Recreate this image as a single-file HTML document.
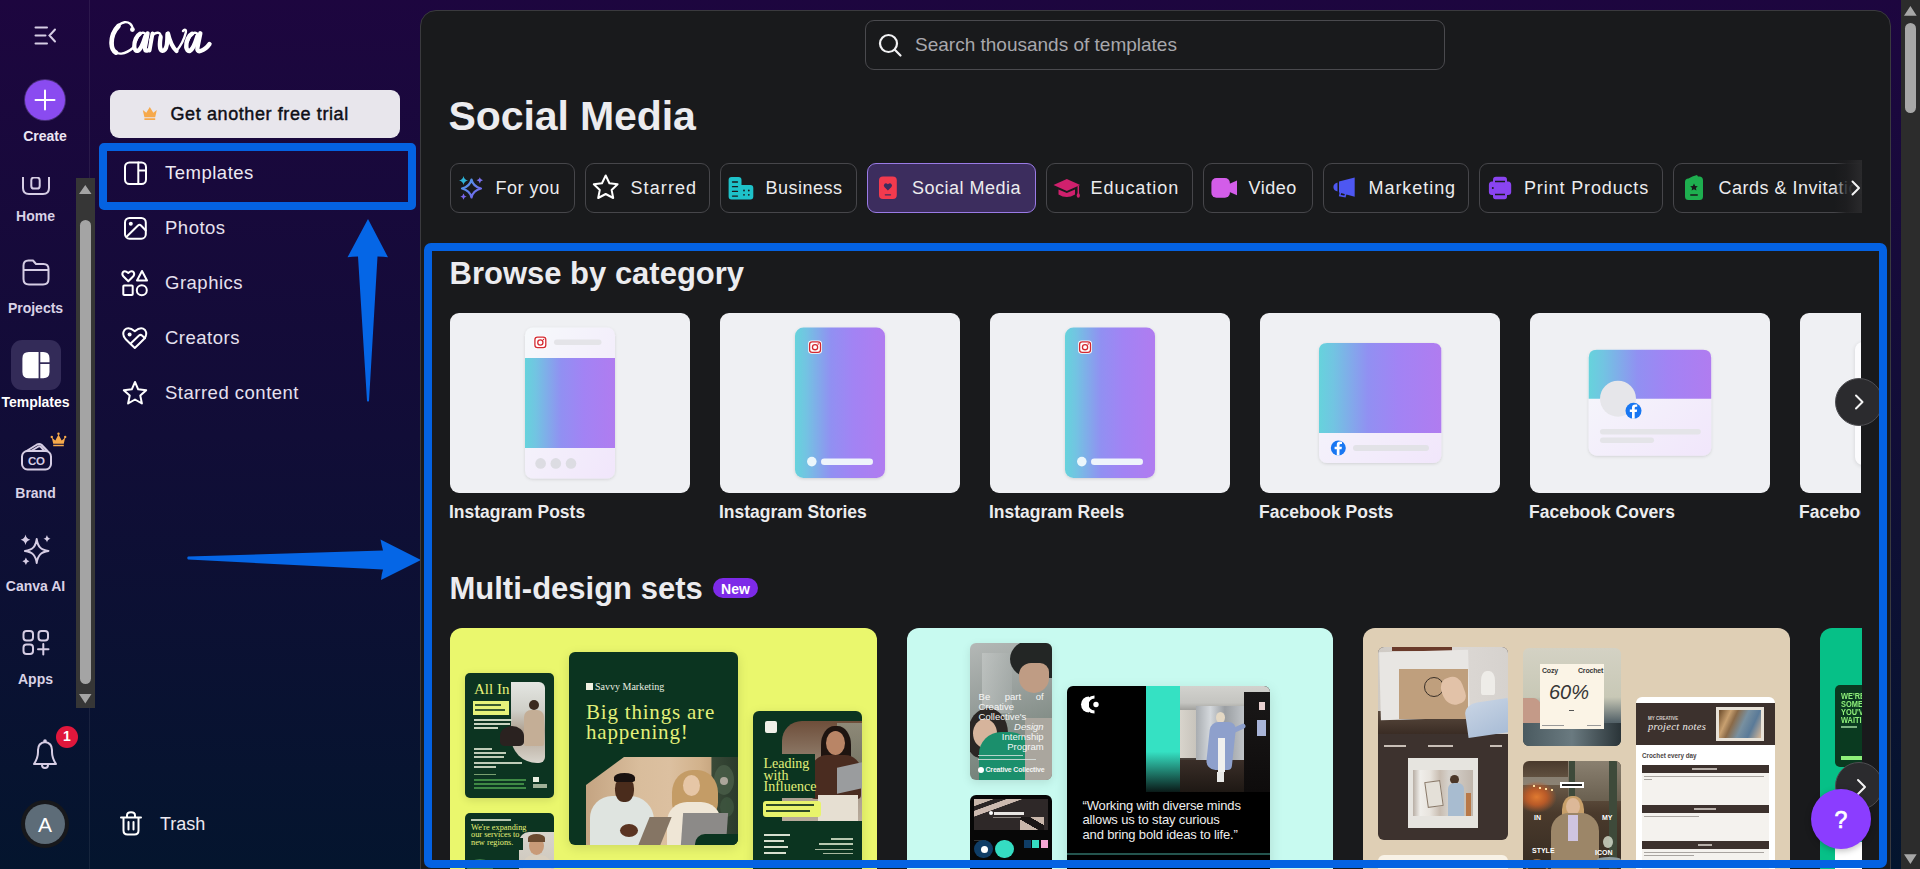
<!DOCTYPE html>
<html><head><meta charset="utf-8">
<style>
html,body{margin:0;padding:0;width:1920px;height:869px;overflow:hidden;}
body{background:linear-gradient(180deg,#1d063f 0%,#110d37 50%,#04152e 100%);font-family:"Liberation Sans",sans-serif;position:relative;color:#fff;}
.a{position:absolute;}
.t{position:absolute;white-space:nowrap;line-height:1;}
svg{position:absolute;overflow:visible;}
.rl{position:absolute;font-size:13px;font-weight:700;color:#d9d2e6;white-space:nowrap;line-height:1;text-align:center;width:90px;left:0;}
.sp{position:absolute;left:165px;font-size:18.5px;letter-spacing:0.5px;margin-top:-0.4px;color:#e6e1ef;white-space:nowrap;line-height:1;}
.chip{position:absolute;top:163px;height:50px;box-sizing:border-box;border:1px solid #46464a;border-radius:9px;}
.ct{position:absolute;top:179px;font-size:18px;letter-spacing:0.5px;color:#ececee;white-space:nowrap;line-height:1;}
.card{position:absolute;top:313px;width:240px;height:180px;border-radius:9px;background:#eff0f3;overflow:hidden;}
.cl{position:absolute;top:504.2px;font-size:17.5px;font-weight:700;color:#ececee;white-space:nowrap;line-height:1;}
.grad{background:linear-gradient(90deg,#5fd6de 0%,#8d92f1 38%,#a284f4 65%,#b07cf0 100%);}
.set{position:absolute;top:628px;width:427px;height:300px;border-radius:12px;overflow:hidden;}
</style></head><body>


<!-- ===== LEFT RAIL ===== -->
<div class="a" style="left:89px;top:0;width:1px;height:869px;background:rgba(255,255,255,0.07)"></div>
<!-- menu icon -->
<svg style="left:0;top:0" width="90" height="60"><g stroke="#d6cde4" stroke-width="2" stroke-linecap="round" fill="none">
<path d="M35.5 27.5H47M35.5 35.5H45.5M35.5 43.5H47M55 29.5L49.5 35.5L55 41.5"/></g></svg>
<!-- create -->
<div class="a" style="left:25px;top:80px;width:40px;height:40px;border-radius:50%;background:#8a4bf0;box-shadow:0 0 0 1px rgba(180,140,255,0.3)"></div>
<svg style="left:0;top:0" width="90" height="130"><path d="M45 90.5V109.5M35.5 100H54.5" stroke="#fff" stroke-width="2" stroke-linecap="round"/></svg>
<div class="rl" style="top:129px;font-size:14px;color:#ece6f4">Create</div>

<!-- rail scroll area -->
<div class="a" style="left:0;top:177px;width:76px;height:531px;overflow:hidden">
  <svg style="left:0;top:-177px" width="76" height="720"><g stroke="#d6cde4" stroke-width="2" fill="none" stroke-linejoin="round">
   <path d="M23 160V188Q23 194 29 194H43Q49 194 49 188V160"/>
   <rect x="31.3" y="177.6" width="8.4" height="10.9" rx="2.6"/>
   <path d="M23.5 266V279Q23.5 284.5 29 284.5H43Q48.5 284.5 48.5 279V269Q48.5 264 43.5 264H36L33 260.5H28.5Q23.5 260.5 23.5 265.5Z"/>
   <path d="M23.5 270H48.5"/>
  </g></svg>
</div>
<div class="rl" style="top:209px;width:71px;font-size:14px">Home</div>
<div class="rl" style="top:301px;width:71px;font-size:14px">Projects</div>
<div class="a" style="left:11px;top:340px;width:50px;height:50px;border-radius:11px;background:#332b58"></div>
<svg style="left:0;top:0" width="90" height="400"><path fill="#fff" d="M28.8 352H38.6V378.3H28.8Q22.4 378.3 22.4 371.9V358.4Q22.4 352 28.8 352ZM40.3 352H43.3Q49.5 352 49.5 358.2V362.3H40.3ZM40.3 364H49.5V372.1Q49.5 378.3 43.3 378.3H40.3Z"/></svg>
<div class="rl" style="top:394.5px;width:71px;font-size:14px;color:#fff">Templates</div>
<!-- brand -->
<svg style="left:0;top:0" width="90" height="500"><g stroke="#d6cde4" stroke-width="2" fill="none" stroke-linejoin="round" stroke-linecap="round">
 <path d="M26.5 451L37 444.5Q39.5 443.2 41.5 444.8L47.5 451"/>
 <path d="M31 451L38.5 446.5Q40 445.8 41 447L44.5 451"/>
 <rect x="22" y="451" width="29" height="18.5" rx="5.5"/>
</g>
<text x="36.3" y="464.6" text-anchor="middle" font-family="Liberation Sans" font-weight="700" font-size="11.5" fill="#d6cde4" letter-spacing="-0.3">CO</text>
<path fill="#f6a94b" d="M51.8 437.5L55.3 440.5L58.5 434.5L61.7 440.5L65.2 437.5L63.8 443.8H53.2Z M53.2 444.8H63.8V446.2H53.2Z"/>
<circle cx="51.8" cy="437" r="1.2" fill="#f6a94b"/><circle cx="58.5" cy="433.8" r="1.2" fill="#f6a94b"/><circle cx="65.2" cy="437" r="1.2" fill="#f6a94b"/>
</svg>
<div class="rl" style="top:486px;width:71px;font-size:14px">Brand</div>
<!-- canva ai -->
<svg style="left:0;top:0" width="90" height="600"><g stroke="#d6cde4" stroke-width="1.9" fill="none" stroke-linejoin="round">
 <path d="M36.7 539C37.8 546.5 40.5 550 48.5 551C40.5 552 37.8 555.5 36.7 563C35.6 555.5 32.9 552 24.9 551C32.9 550 35.6 546.5 36.7 539Z"/>
</g><g fill="#d6cde4">
 <path d="M25.5 534.5Q26.3 538.9 30.3 539.7Q26.3 540.5 25.5 544.9Q24.7 540.5 20.7 539.7Q24.7 538.9 25.5 534.5Z"/>
 <path d="M47 535Q47.6 538.2 50.5 538.8Q47.6 539.4 47 542.6Q46.4 539.4 43.5 538.8Q46.4 538.2 47 535Z"/>
 <path d="M25.9 557.5Q26.5 560.6 29.4 561.2Q26.5 561.8 25.9 564.9Q25.3 561.8 22.4 561.2Q25.3 560.6 25.9 557.5Z"/>
</g></svg>
<div class="rl" style="top:579px;width:71px;font-size:14px">Canva AI</div>
<!-- apps -->
<svg style="left:0;top:0" width="90" height="700"><g stroke="#d6cde4" stroke-width="2" fill="none">
 <rect x="23.5" y="631" width="9.5" height="9.5" rx="3"/>
 <rect x="38.5" y="631" width="9.5" height="9.5" rx="3"/>
 <rect x="23.5" y="644.5" width="9.5" height="9.5" rx="3"/>
 <path d="M43.3 644V654.5M38 649.3H48.5" stroke-linecap="round"/>
</g></svg>
<div class="rl" style="top:671.5px;width:71px;font-size:14px">Apps</div>

<!-- rail scrollbar -->
<div class="a" style="left:76px;top:178px;width:19px;height:530px;background:#363636"></div>
<div class="a" style="left:80px;top:220px;width:11px;height:464px;border-radius:6px;background:#a4a4a4"></div>
<svg style="left:0;top:0" width="100" height="720"><path d="M85.3 185L91.5 194H79Z M85.3 703.5L91.5 694H79Z" fill="#a4a4a4"/></svg>

<!-- bell -->
<svg style="left:0;top:0" width="90" height="780"><g stroke="#d6cde4" stroke-width="2" fill="none" stroke-linejoin="round">
 <path d="M34 764H56Q52 758 52 752V750Q52 743 45 742Q38 743 38 750V752Q38 758 34 764Z"/>
 <path d="M42 765Q42 768 45 768Q48 768 48 765"/>
</g><circle cx="45" cy="741" r="1.8" fill="#d6cde4"/></svg>
<div class="a" style="left:56px;top:725.5px;width:22px;height:22px;border-radius:50%;background:#e0173c"></div>
<div class="t" style="left:56px;top:729px;width:22px;text-align:center;font-size:14px;font-weight:700;color:#fff">1</div>
<!-- avatar -->
<div class="a" style="left:21px;top:799.5px;width:48px;height:48px;border-radius:50%;background:#17181c"></div>
<div class="a" style="left:25px;top:803.5px;width:40px;height:40px;border-radius:50%;background:#5d6c78"></div>
<div class="t" style="left:25px;top:814px;width:40px;text-align:center;font-size:21px;color:#fff">A</div>


<!-- ===== SIDE PANEL ===== -->
<!-- logo -->
<svg style="left:110px;top:21px" width="104" height="36"><g fill="none" stroke="#fff" stroke-linecap="round" stroke-linejoin="round">
<path stroke-width="2.4" d="M22.8 8.8C22.5 3 18.5 0.6 14.5 1.2C7 2.5 1 13 0.9 21.5C0.8 29.5 5.5 33.2 11.5 32.6C15.5 32.2 19.5 30 23.5 26.5"/>
<path stroke-width="4.6" d="M8.5 5C4 9.5 1.6 16 1.6 22C1.6 26.5 3 30 6 31.6"/>
<circle cx="22.4" cy="8.6" r="2.4" fill="#fff" stroke="none"/>
<path stroke-width="2.4" d="M23.5 26.5C25 22 28 14 31 12.3C33 11.2 35 12 35.8 13.5"/>
<path stroke-width="4.2" d="M29.8 12.8C26.5 14.5 24.3 20 24.3 25C24.3 29 26 30.5 28 29.8C30.5 28.5 33 23 35.5 15"/>
<path stroke-width="4.2" d="M37.6 12.3L35 26C34.5 29 35.5 30.3 37.5 29.5"/>
<path stroke-width="4" d="M42.5 12.5L39.5 29.5"/>
<path stroke-width="2.4" d="M40.5 19C42 14.5 45 11.5 48 11.8C50.5 12 51 14 50.5 17"/>
<path stroke-width="4.4" d="M50.6 16C50 20 49.5 24 50.2 27C50.8 30 53 30.5 55 28.5C57 26.5 57.5 22 57.5 13"/>
<path stroke-width="4.2" d="M58 12.5C59.5 19 62 26 66.5 30"/>
<path stroke-width="2.4" d="M66.5 30C70.5 25 74.5 17 75.8 11.5C76.5 8.5 74.5 8 73 10"/>
<path stroke-width="2.4" d="M75.5 26.5C77 22 80 14 83 12.3C85 11.2 87 12 87.8 13.5"/>
<path stroke-width="4.4" d="M82 12.8C78.5 14.5 76.3 20 76.3 25C76.3 29 78 30.5 80 29.8C82.5 28.5 85 23 87.5 15"/>
<path stroke-width="4.4" d="M90.3 12.3L87.5 26C87 29 88 30.8 90.5 30C93.5 29 97.5 26 99.5 23"/>
</g></svg>

<!-- free trial button -->
<div class="a" style="left:110px;top:90px;width:290px;height:48px;border-radius:9px;background:#e8e6ec"></div>
<svg style="left:0;top:0" width="400" height="140"><path fill="#f6a94b" d="M142.8 110L146.3 112.8L149.8 107L153.3 112.8L156.8 110L155.2 117.2H144.4Z M144.4 118.3H155.2V120H144.4Z"/></svg>
<div class="t" style="left:170.5px;top:104.5px;font-size:18px;letter-spacing:0.6px;-webkit-text-stroke:0.45px #0f0f16;color:#0f0f16">Get another free trial</div>

<!-- nav -->
<svg style="left:0;top:0" width="420" height="869"><g fill="none" stroke="#fff" stroke-width="2" stroke-linejoin="round" stroke-linecap="round">
 <rect x="125" y="162.5" width="21" height="21.5" rx="4.5"/><path d="M138.3 162.5V184M138.3 170.5H146"/>
 <rect x="125" y="218" width="20.8" height="20.7" rx="4.5"/><path d="M126.8 236.5L138 225.5Q139.5 224 141 225.5L145.8 230.5"/>
 <path d="M128.3 281.3L123.3 276.3Q121.5 274 123 272Q125 270 128.3 273Q131.5 270 133.5 272Q135 274 133.3 276.3Z"/>
 <path d="M142 271L147 280.5H137Z"/>
 <rect x="123.3" y="285.5" width="9.4" height="9.6" rx="0.8"/>
 <circle cx="141.8" cy="290.2" r="5"/>
 <path d="M134.8 348Q131 344.5 125.5 339Q121.5 334 124.5 330Q128.5 326 134.8 331.3Q141 326 145 330Q148 334 144 339Q138.5 344.5 134.8 348Z"/>
 <path d="M130.7 343.5L139 335.5Q140.5 334.2 142 335.5L145 338.3"/>
 <path d="M135 382L138.2 389.3L146.2 390.2L140.3 395.6L141.9 403.5L135 399.5L128.1 403.5L129.7 395.6L123.8 390.2L131.8 389.3Z"/>
 <path d="M121 817.5H141M127 817V815.5Q127 812.3 131 812.3Q135 812.3 135 815.5V817M123.5 818V830.5Q123.5 834.5 127.5 834.5H134.5Q138.5 834.5 138.5 830.5V818M128.5 822V829.5M133.5 822V829.5"/>
</g>
<circle cx="130.8" cy="223.8" r="2" fill="#fff"/>
<circle cx="129.6" cy="334.4" r="2" fill="#fff"/>
</svg>
<div class="sp" style="top:164.5px;color:#ede9f3">Templates</div>
<div class="sp" style="top:219.5px">Photos</div>
<div class="sp" style="top:274.5px">Graphics</div>
<div class="sp" style="top:329.5px">Creators</div>
<div class="sp" style="top:384.5px">Starred content</div>
<div class="t" style="left:160px;top:814.8px;font-size:18px;color:#eceaf2">Trash</div>

<!-- annotation: blue rect around Templates -->
<div class="a" style="left:99px;top:143px;width:317px;height:67px;box-sizing:border-box;border:8px solid #0462e2;border-radius:5px"></div>
<!-- annotation arrows -->
<svg style="left:0;top:0" width="440" height="869">
 <path fill="#0566e6" d="M368 219L388 257.3Q384 256.8 377.5 256.6L369 401Q368 402 367 401L358 256.6Q352 256.8 347.5 257.3Z"/>
 <path fill="#0566e6" d="M421 560L380.5 539.5Q381.5 545 383 550.5L188 556.5Q186.5 558 188 559.5L383 569.5Q381.5 574 381 580Z"/>
</svg>


<!-- ===== MAIN PANEL ===== -->
<div class="a" id="panel" style="left:420px;top:10px;width:1471px;height:900px;box-sizing:border-box;border:1px solid #3a3a3e;border-radius:16px;background:#191a1c;overflow:hidden"></div>

<!-- search -->
<div class="a" style="left:865px;top:20px;width:580px;height:50px;box-sizing:border-box;border:1px solid #4a4a4e;border-radius:9px"></div>
<svg style="left:0;top:0" width="920" height="80"><g fill="none" stroke="#f2f2f4" stroke-width="2.2" stroke-linecap="round"><circle cx="888.5" cy="43.5" r="8.5"/><path d="M894.8 49.8L900.5 55.5"/></g></svg>
<div class="t" style="left:915px;top:35.2px;font-size:19px;color:#a8a8ad">Search thousands of templates</div>

<!-- title -->
<div class="t" style="left:448.5px;top:96px;font-size:41px;font-weight:700;color:#ececef;letter-spacing:-0.1px">Social Media</div>

<!-- chips -->
<div class="chip" style="left:450px;width:125px"></div>
<div class="chip" style="left:585px;width:125px"></div>
<div class="chip" style="left:720px;width:137px"></div>
<div class="chip" style="left:867px;width:169px;background:#3c2d5e;border-color:#9a7be6"></div>
<div class="chip" style="left:1046px;width:147px"></div>
<div class="chip" style="left:1203px;width:110px"></div>
<div class="chip" style="left:1323px;width:146px"></div>
<div class="chip" style="left:1479px;width:184px"></div>
<div class="a" style="left:1673px;top:163px;width:189px;height:50px;overflow:hidden"><div class="chip" style="left:0;top:0;width:240px"></div></div>

<div class="ct" style="left:495.5px">For you</div>
<div class="ct" style="left:630.5px;letter-spacing:1.1px">Starred</div>
<div class="ct" style="left:765.5px">Business</div>
<div class="ct" style="left:912px">Social Media</div>
<div class="ct" style="left:1090.5px;letter-spacing:0.95px">Education</div>
<div class="ct" style="left:1248.5px">Video</div>
<div class="ct" style="left:1368.5px;letter-spacing:0.95px">Marketing</div>
<div class="ct" style="left:1524px;letter-spacing:0.86px">Print Products</div>
<div class="a" style="left:1673px;top:163px;width:189px;height:50px;overflow:hidden"><div class="ct" style="left:45.5px;top:16px">Cards &amp; Invitations</div></div>
<div class="a" style="left:1834px;top:160px;width:28px;height:53px;background:linear-gradient(90deg,rgba(25,26,28,0) 0%,rgba(30,30,32,0.88) 45%,#2a2a2c 100%)"></div>
<svg style="left:0;top:0" width="1900" height="220">
 <!-- sparkle -->
 <defs><linearGradient id="spg" x1="0" y1="0" x2="1" y2="1"><stop offset="0" stop-color="#4aa3e6"/><stop offset="1" stop-color="#7b5df0"/></linearGradient></defs>
 <path d="M471.5 179.5Q473 186.5 481 188.5Q473 190.5 471.5 197.5Q470 190.5 462 188.5Q470 186.5 471.5 179.5Z" fill="none" stroke="url(#spg)" stroke-width="2.2" stroke-linejoin="round"/>
 <path d="M463.5 176Q464.2 179.8 468 180.5Q464.2 181.2 463.5 185Q462.8 181.2 459 180.5Q462.8 179.8 463.5 176Z" fill="#2eb3d6"/>
 <path d="M479.8 177.2Q480.3 179.8 483 180.3Q480.3 180.8 479.8 183.4Q479.3 180.8 476.6 180.3Q479.3 179.8 479.8 177.2Z" fill="#7a70ea"/>
 <path d="M463.5 193.5Q464 196.1 466.7 196.6Q464 197.1 463.5 199.7Q463 197.1 460.3 196.6Q463 196.1 463.5 193.5Z" fill="#7a66ec"/>
 <!-- star -->
 <path d="M605.7 175.5L609.4 183.2L617.6 184.2L611.6 189.9L613.2 198L605.7 194L598.2 198L599.8 189.9L593.8 184.2L602 183.2Z" fill="none" stroke="#fff" stroke-width="2" stroke-linejoin="round"/>
 <!-- business -->
 <path fill="#1ec2c9" d="M731.5 177H738.5Q741.5 177 741.5 180V185H750.5Q753.3 185 753.3 188V196.5Q753.3 199.4 750.5 199.4H731.5Q728.6 199.4 728.6 196.5V180Q728.6 177 731.5 177Z"/>
 <g stroke="#191a1c" stroke-width="1.3" stroke-linecap="round"><path d="M732.5 182H737.5M732.5 186.7H737.5M732.5 191.4H737.5M732.5 196.1H737.5"/></g>
 <g fill="#191a1c"><circle cx="744" cy="190.5" r="0.9"/><circle cx="748.8" cy="190.5" r="0.9"/><circle cx="744" cy="194.8" r="0.9"/><circle cx="748.8" cy="194.8" r="0.9"/></g>
 <!-- social -->
 <rect x="879" y="176.6" width="17.8" height="22.3" rx="4" fill="#f23a4e"/>
 <path d="M887.9 190.5L884.6 187.3Q883 185.5 884.4 183.9Q886 182.5 887.9 184.3Q889.8 182.5 891.4 183.9Q892.8 185.5 891.2 187.3Z" fill="#3c2d5e"/>
 <path d="M885.3 194.8H890.5" stroke="#3c2d5e" stroke-width="1.3" stroke-linecap="round"/>
 <!-- education -->
 <path fill="#d0206d" d="M1066.8 179L1080.2 185L1066.8 191L1053.5 185Z"/>
 <path fill="#d0206d" d="M1058.5 189.5V194.5Q1066.8 199.5 1075 194.5V189.5L1066.8 193Z"/>
 <path d="M1078.3 186V194" stroke="#d0206d" stroke-width="1.5"/><ellipse cx="1078.3" cy="195.5" rx="1.6" ry="2.2" fill="#d0206d"/>
 <!-- video -->
 <rect x="1211.4" y="178" width="18.5" height="19.7" rx="5" fill="#d35de9"/>
 <path fill="#d35de9" d="M1229 184L1237 180.5V195.2L1229 191.7Z"/>
 <!-- marketing -->
 <path fill="#4d57f2" d="M1339 181.5L1354.7 177.4V196.7L1339 192.5Z"/>
 <path fill="#4d57f2" d="M1337.5 182.5V191.5Q1333.4 190.5 1333.4 187Q1333.4 183.5 1337.5 182.5Z"/>
 <path fill="none" stroke="#4d57f2" stroke-width="1.6" d="M1340.5 192L1339.8 195.5L1345 196.5L1345.8 193.5"/>
 <!-- printer -->
 <path fill="#8a44f0" d="M1493 180Q1493 176.7 1496 176.7H1504Q1507 176.7 1507 180V181.5H1508Q1511.2 181.5 1511.2 185V192Q1511.2 195 1508 195H1507V196.5Q1507 199.2 1504.5 199.2H1495.5Q1493 199.2 1493 196.5V195H1492Q1488.9 195 1488.9 192V185Q1488.9 181.5 1492 181.5H1493Z"/>
 <path d="M1495 181.5H1505M1495 194.5H1505" stroke="#191a1c" stroke-width="1.3"/>
 <circle cx="1492.8" cy="188" r="1" fill="#191a1c"/>
 <!-- cards -->
 <path fill="#1eae4f" d="M1688.5 178.5Q1692 176 1697 175L1698 176.5H1700Q1703 177 1703 180.5V196.5Q1703 200 1699.5 200H1688.5Q1685 200 1685 196.5V182Q1685 178.5 1688.5 178.5Z"/>
 <path d="M1694 183.5L1695.2 186L1697.8 186.3L1695.9 188L1696.4 190.5L1694 189.3L1691.6 190.5L1692.1 188L1690.2 186.3L1692.8 186Z" fill="#191a1c"/>
 <path d="M1690.7 195H1697.3" stroke="#191a1c" stroke-width="1.3" stroke-linecap="round"/>
 <!-- chevron -->
 <path d="M1852.5 181.5L1859 188L1852.5 194.5" fill="none" stroke="#f4f4f4" stroke-width="2" stroke-linecap="round" stroke-linejoin="round"/>
</svg>


<!-- ===== BROWSE BY CATEGORY ===== -->
<div class="t" style="left:449.5px;top:258px;font-size:31px;font-weight:700;color:#ececef">Browse by category</div>
<div class="card" style="left:450px"></div>
<div class="card" style="left:720px"></div>
<div class="card" style="left:990px"></div>
<div class="card" style="left:1260px"></div>
<div class="card" style="left:1530px"></div>
<div class="a" style="left:1800px;top:313px;width:61px;height:180px;overflow:hidden"><div class="card" style="left:0;top:0"></div>
 <div class="a" style="left:55px;top:29px;width:60px;height:123px;border-radius:8px;background:#fbfbfd;box-shadow:0 1px 4px rgba(0,0,0,0.12)"></div></div>
<svg style="left:0;top:0" width="1900" height="500">
 <defs>
  <linearGradient id="gr" x1="0" y1="0" x2="1" y2="0"><stop offset="0" stop-color="#66d3dc"/><stop offset="0.12" stop-color="#72c4e2"/><stop offset="0.4" stop-color="#9190f2"/><stop offset="0.65" stop-color="#a283f4"/><stop offset="1" stop-color="#b07cf0"/></linearGradient>
  <linearGradient id="wh" x1="0" y1="0" x2="1" y2="1"><stop offset="0" stop-color="#f6f9fb"/><stop offset="1" stop-color="#f1e6fb"/></linearGradient>
  <filter id="sh" x="-20%" y="-20%" width="140%" height="140%"><feDropShadow dx="0" dy="1" stdDeviation="1.5" flood-color="#000" flood-opacity="0.13"/></filter>
 </defs>
 <!-- IG post -->
 <g filter="url(#sh)"><rect x="525" y="327.5" width="90" height="151" rx="8" fill="url(#wh)"/></g>
 <rect x="525" y="358" width="90" height="90" fill="url(#gr)"/>
 <rect x="533.5" y="335.8" width="13.7" height="13.3" rx="3.3" fill="#fff"/>
<rect x="534.9" y="337.2" width="10.9" height="10.5" rx="2.6" fill="none" stroke="#d42a32" stroke-width="1.3"/>
<circle cx="540.35" cy="342.45" r="2.6" fill="none" stroke="#d42a32" stroke-width="1.3"/>
<circle cx="543.5" cy="339.40000000000003" r="0.75" fill="#d42a32"/>
 <rect x="554" y="339.5" width="47.5" height="5.5" rx="2.75" fill="#e4e4e8"/>
 <circle cx="540.6" cy="463.4" r="5.3" fill="#dcdce2"/><circle cx="555.8" cy="463.4" r="5.3" fill="#dcdce2"/><circle cx="571" cy="463.4" r="5.3" fill="#dcdce2"/>
 <!-- IG story -->
 <g filter="url(#sh)"><rect x="795" y="327.5" width="90" height="150.5" rx="8.5" fill="url(#gr)"/></g>
 <rect x="808.2" y="340.5" width="13.7" height="13.3" rx="3.3" fill="#fff"/>
<rect x="809.6" y="341.9" width="10.9" height="10.5" rx="2.6" fill="none" stroke="#d42a32" stroke-width="1.3"/>
<circle cx="815.0500000000001" cy="347.15" r="2.6" fill="none" stroke="#d42a32" stroke-width="1.3"/>
<circle cx="818.2" cy="344.1" r="0.75" fill="#d42a32"/>
 <circle cx="811.8" cy="461.6" r="4.8" fill="#eaf6fb"/><rect x="821" y="458.5" width="52" height="6.5" rx="3.25" fill="#eef4fb"/>
 <!-- IG reels -->
 <g filter="url(#sh)"><rect x="1065" y="327.5" width="90" height="150.5" rx="8.5" fill="url(#gr)"/></g>
 <rect x="1078.2" y="340.5" width="13.7" height="13.3" rx="3.3" fill="#fff"/>
<rect x="1079.6000000000001" y="341.9" width="10.9" height="10.5" rx="2.6" fill="none" stroke="#d42a32" stroke-width="1.3"/>
<circle cx="1085.05" cy="347.15" r="2.6" fill="none" stroke="#d42a32" stroke-width="1.3"/>
<circle cx="1088.2" cy="344.1" r="0.75" fill="#d42a32"/>
 <circle cx="1081.8" cy="461.6" r="4.8" fill="#eaf6fb"/><rect x="1091" y="458.5" width="52" height="6.5" rx="3.25" fill="#eef4fb"/>
 <!-- FB post -->
 <g filter="url(#sh)"><rect x="1319" y="343" width="122.3" height="120" rx="8" fill="url(#wh)"/></g>
 <path d="M1319 433V351Q1319 343 1327 343H1433.3Q1441.3 343 1441.3 351V433Z" fill="url(#gr)"/>
 <circle cx="1338.3" cy="448" r="7.5" fill="#1877f2"/>
<path d="M1339.5 455.5V449.2H1341.6L1341.8999999999999 446.7H1339.5V445.2Q1339.5 444 1340.8 444H1342.0V441.8Q1341.1 441.6 1340.1 441.6Q1336.8 441.6 1336.8 444.8V446.7H1334.6V449.2H1336.8V455.5Z" fill="#fff"/>
 <rect x="1353" y="445" width="76" height="6" rx="3" fill="#e2e2e7"/>
 <!-- FB cover -->
 <g filter="url(#sh)"><rect x="1588.7" y="349.7" width="122.5" height="106" rx="8" fill="url(#wh)"/></g>
 <path d="M1588.7 398.7V357.7Q1588.7 349.7 1596.7 349.7H1703.2Q1711.2 349.7 1711.2 357.7V398.7Z" fill="url(#gr)"/>
 <circle cx="1618" cy="398.7" r="18" fill="#e6e6ea"/>
 <circle cx="1633.5" cy="410.8" r="8" fill="#1877f2"/>
<path d="M1634.7 418.8V412.0H1636.8L1637.1 409.5H1634.7V408.0Q1634.7 406.8 1636.0 406.8H1637.2V404.6Q1636.3 404.40000000000003 1635.3 404.40000000000003Q1632.0 404.40000000000003 1632.0 407.6V409.5H1629.8V412.0H1632.0V418.8Z" fill="#fff"/>
 <rect x="1600" y="429" width="100.8" height="5.5" rx="2.75" fill="#e4e4e8"/>
 <rect x="1600" y="437.5" width="54" height="5.5" rx="2.75" fill="#e4e4e8"/>
</svg>
<div class="cl" style="left:449px">Instagram Posts</div>
<div class="cl" style="left:719px">Instagram Stories</div>
<div class="cl" style="left:989px">Instagram Reels</div>
<div class="cl" style="left:1259px">Facebook Posts</div>
<div class="cl" style="left:1529px">Facebook Covers</div>
<div class="a" style="left:1799px;top:495px;width:62px;height:30px;overflow:hidden"><div class="cl" style="left:0;top:9.2px">Facebook</div></div>
<!-- next button -->
<div class="a" style="left:1835px;top:378px;width:48px;height:48px;box-sizing:border-box;border-radius:50%;background:#2b2b2e;border:1px solid #4e4e52"></div>
<svg style="left:0;top:0" width="1900" height="500"><path d="M1856 395.5L1862.5 402L1856 408.5" fill="none" stroke="#f4f4f4" stroke-width="2" stroke-linecap="round" stroke-linejoin="round"/></svg>


<!-- ===== MULTI-DESIGN SETS ===== -->
<div class="t" style="left:449.5px;top:572.8px;font-size:31px;font-weight:700;color:#ececef">Multi-design sets</div>
<div class="a" style="left:713px;top:578px;width:45px;height:20px;border-radius:10px;background:#7d2ae8"></div>
<div class="t" style="left:713px;top:581.5px;width:45px;text-align:center;font-size:14px;font-weight:700;color:#fff">New</div>

<div class="a" style="left:432px;top:620px;width:1430px;height:250px;overflow:hidden">
 <!-- set 1 : yellow -->
 <div class="a" style="left:18px;top:8px;width:427px;height:260px;border-radius:12px;background:#eaf76d;overflow:hidden">
  <!-- A -->
  <div class="a" style="left:15px;top:45px;width:89px;height:125px;border-radius:5px;background:#0c3421;box-shadow:0 2px 8px rgba(0,0,0,0.12);overflow:hidden">
   <div class="a" style="left:46px;top:9px;width:34px;height:81px;border-radius:0 6px 6px 26px;background:linear-gradient(180deg,#e4e6e2 0%,#cfcfc8 35%,#b0a292 60%,#d8d4cc 100%)"></div>
   <div class="a" style="left:64px;top:27px;width:10px;height:10px;border-radius:50%;background:#3a2a20"></div>
   <div class="a" style="left:59px;top:37px;width:20px;height:36px;border-radius:7px 7px 2px 2px;background:#c4ae96"></div>
   <div class="a" style="left:35px;top:53px;width:24px;height:20px;border-radius:50% 50% 20% 20%;background:#2a2220"></div>
   <div class="t" style="left:9px;top:9px;font-family:'Liberation Serif';font-size:15px;color:#e6f27a">All In</div>
   <div class="a" style="left:8px;top:28px;width:36px;height:14px;background:#e6f27a"></div>
   <div class="a" style="left:10px;top:31px;width:26px;height:2px;background:#3a5a30"></div>
   <div class="a" style="left:10px;top:36px;width:30px;height:2px;background:#3a5a30"></div>
   <div class="a" style="left:9px;top:46px;width:38px;height:1.5px;background:#c8d4c0"></div>
   <div class="a" style="left:9px;top:50px;width:36px;height:1.5px;background:#c8d4c0"></div>
   <div class="a" style="left:9px;top:54px;width:24px;height:1.5px;background:#c8d4c0"></div>
   <div class="a" style="left:9px;top:75px;width:18px;height:1.5px;background:#c0ccb8"></div>
   <div class="a" style="left:9px;top:79px;width:32px;height:1.5px;background:#c0ccb8"></div>
   <div class="a" style="left:9px;top:83px;width:30px;height:1.5px;background:#c0ccb8"></div>
   <div class="a" style="left:9px;top:89px;width:48px;height:1.5px;background:#c0ccb8"></div>
   <div class="a" style="left:9px;top:93px;width:22px;height:1.5px;background:#c0ccb8"></div>
   <div class="a" style="left:9px;top:101px;width:22px;height:1px;background:#7aa070"></div>
   <div class="a" style="left:9px;top:106px;width:52px;height:1.5px;background:#3f8a45"></div>
   <div class="a" style="left:9px;top:110px;width:50px;height:1.5px;background:#3f8a45"></div>
   <div class="a" style="left:9px;top:114px;width:52px;height:1.5px;background:#3f8a45"></div>
   <div class="a" style="left:68px;top:104px;width:6px;height:5px;background:#e8eee0"></div>
   <div class="a" style="left:68px;top:111px;width:14px;height:4px;background:#9fb098"></div>
  </div>
  <!-- B -->
  <div class="a" style="left:15px;top:185px;width:89px;height:80px;border-radius:5px;background:#0c3421;overflow:hidden">
   <div class="a" style="left:6px;top:6px;width:40px;height:1.5px;background:#b9c7b0"></div>
   <div class="a" style="left:54px;top:19px;width:35px;height:61px;border-radius:10px 0 0 0;background:linear-gradient(180deg,#d8d4cc,#c8c0b4)"></div>
   <div class="a" style="left:64px;top:24px;width:15px;height:18px;border-radius:50%;background:#c89a78"></div>
   <div class="a" style="left:63px;top:21px;width:17px;height:8px;border-radius:50% 50% 0 0;background:#6a4a30"></div>
   <div class="a" style="left:58px;top:42px;width:28px;height:30px;border-radius:10px 10px 0 0;background:#d8cfc0"></div>
   <div class="a" style="left:0;top:25px;width:58px;height:12px;background:#0c3421"></div>
   <div class="a" style="left:2px;top:46px;width:26px;height:20px;border-radius:50%;background:#3a7a48"></div>
   <div class="t" style="left:6px;top:11px;font-family:'Liberation Serif';font-size:8.3px;line-height:7.3px;color:#e6f27a">We're expanding<br>our services to<br>new regions.</div>
  </div>
  <!-- C -->
  <div class="a" style="left:119px;top:24px;width:169px;height:193px;border-radius:6px;background:#0b3420;box-shadow:0 3px 12px rgba(0,0,0,0.12);overflow:hidden">
   <div class="a" style="left:17px;top:31px;width:7px;height:7px;background:#f0f0e0"></div>
   <div class="t" style="left:26px;top:30px;font-family:'Liberation Serif';font-size:10px;color:#e9efe0">Savvy Marketing</div>
   <div class="t" style="left:17px;top:49.5px;font-family:'Liberation Serif';font-size:21px;line-height:20px;letter-spacing:0.8px;color:#e3f07a">Big things are<br>happening!</div>
   <div class="a" style="left:17px;top:105px;width:152px;height:88px;overflow:hidden;clip-path:polygon(0 28px,38px 0,100% 0,100% 100%,0 100%);background:linear-gradient(90deg,#c4a482 0%,#d9bd9c 35%,#dcc0a0 55%,#d2b28c 75%,#c9a882 82%,#3a4a38 83%,#2a3a2c 100%)">
    <div class="a" style="left:128px;top:8px;width:20px;height:30px;border-radius:50%;background:#4a5e48;opacity:0.8"></div>
    <div class="a" style="left:134px;top:40px;width:14px;height:20px;border-radius:50%;background:#3e5640;opacity:0.8"></div>
    <div class="a" style="left:134px;top:20px;width:8px;height:8px;border-radius:50%;background:#d8c8c0;opacity:0.7"></div>
    <div class="a" style="left:4px;top:39px;width:64px;height:52px;border-radius:22px 24px 0 0;background:#dfe4e0"></div>
    <div class="a" style="left:29px;top:20px;width:19px;height:25px;border-radius:45%;background:#4a2c1c"></div>
    <div class="a" style="left:28px;top:16px;width:21px;height:9px;border-radius:50% 50% 20% 20%;background:#1a1210"></div>
    <div class="a" style="left:86px;top:13px;width:46px;height:50px;border-radius:45% 45% 35% 35%;background:#c49c66"></div>
    <div class="a" style="left:81px;top:45px;width:54px;height:45px;border-radius:20px 20px 0 0;background:#efe6d6"></div>
    <div class="a" style="left:96.5px;top:18px;width:17px;height:21px;border-radius:50%;background:#e6c6a6"></div>
    <div class="a" style="left:34px;top:67px;width:18px;height:13px;border-radius:50%;background:#5a3422"></div>
    <div class="a" style="left:58px;top:60px;width:22px;height:28px;background:#857564;transform:skewX(-22deg)"></div>
    <div class="a" style="left:96px;top:56px;width:45px;height:32px;background:#8c8a88;transform:skewX(-4deg)"></div>
    <div class="a" style="left:109px;top:77px;width:50px;height:14px;border-radius:10px 0 0 0;background:#0b3420"></div>
   </div>
  </div>
  <!-- D -->
  <div class="a" style="left:303px;top:83px;width:109px;height:190px;border-radius:6px;background:#0b3420;box-shadow:0 3px 12px rgba(0,0,0,0.12);overflow:hidden">
   <div class="a" style="left:29px;top:10px;width:80px;height:100px;border-radius:20px 0 0 0;background:linear-gradient(180deg,#6e4e3a 0%,#8c7866 35%,#a8998a 65%,#b8ab9c 100%)"></div>
   <div class="a" style="left:84px;top:12px;width:25px;height:45px;background:linear-gradient(180deg,#9aa090,#6a7060);opacity:0.7"></div>
   <div class="a" style="left:68px;top:15px;width:30px;height:42px;border-radius:45% 45% 30% 30%;background:#1e1410"></div>
   <div class="a" style="left:73px;top:20px;width:19px;height:24px;border-radius:50%;background:#b98566"></div>
   <div class="a" style="left:58px;top:44px;width:50px;height:44px;border-radius:16px 16px 4px 4px;background:#4a2c20"></div>
   <div class="a" style="left:65px;top:84px;width:40px;height:26px;background:#e6dfd2"></div>
   <div class="a" style="left:84px;top:54px;width:25px;height:26px;background:#9a9c9e;transform:skewY(-12deg)"></div>
   <div class="a" style="left:0;top:43px;width:62px;height:44px;background:#0b3420"></div>
   <div class="a" style="left:12px;top:10px;width:12px;height:12px;background:#f0f0e8;border-radius:2px"></div>
   <div class="t" style="left:10.5px;top:47.4px;font-family:'Liberation Serif';font-size:14px;line-height:11.5px;color:#e3f07a">Leading<br>with<br>Influence</div>
   <div class="a" style="left:10px;top:89.5px;width:58px;height:16px;border-radius:3px;background:#e8f46b"></div>
   <div class="a" style="left:13px;top:93px;width:48px;height:1.5px;background:#2e4a28"></div>
   <div class="a" style="left:13px;top:99px;width:44px;height:1.5px;background:#2e4a28"></div>
   <div class="a" style="left:11px;top:123px;width:26px;height:1.5px;background:#d8e0d0"></div>
   <div class="a" style="left:11px;top:129px;width:20px;height:1.5px;background:#d8e0d0"></div>
   <div class="a" style="left:11px;top:135px;width:24px;height:1.5px;background:#d8e0d0"></div>
   <div class="a" style="left:11px;top:141px;width:22px;height:1.5px;background:#d8e0d0"></div>
   <div class="a" style="left:78px;top:127px;width:22px;height:1.5px;background:#b8c8b0"></div>
   <div class="a" style="left:66px;top:132px;width:34px;height:1.5px;background:#b8c8b0"></div>
   <div class="a" style="left:62px;top:138px;width:38px;height:1px;background:#a8b8a0"></div>
   <div class="a" style="left:70px;top:142px;width:30px;height:1px;background:#a8b8a0"></div>
  </div>
 </div>

 <!-- set 2 : mint -->
 <div class="a" style="left:475px;top:8px;width:426px;height:260px;border-radius:12px;background:#c8faf0;overflow:hidden">
  <div class="a" style="left:63px;top:15px;width:82px;height:137px;border-radius:6px;overflow:hidden;background:linear-gradient(160deg,#b4b8b6 0%,#9aa19e 35%,#86908a 60%,#6a7a70 100%);box-shadow:0 3px 10px rgba(0,0,0,0.1)">
   <div class="a" style="left:12px;top:10px;width:30px;height:60px;background:linear-gradient(90deg,#c8ccca,#a8aeac);opacity:0.6"></div>
   <div class="a" style="left:40px;top:-3px;width:44px;height:38px;border-radius:50% 0 0 50%;background:#232625"></div>
   <div class="a" style="left:49px;top:20px;width:30px;height:30px;border-radius:40% 30% 50% 50%;background:#bf9c84"></div>
   <div class="a" style="left:-2px;top:65px;width:40px;height:50px;border-radius:50% 50% 30% 30%;background:#2a2624"></div>
   <div class="a" style="left:3px;top:76px;width:24px;height:29px;border-radius:50%;background:#d6b49c"></div>
   <div class="a" style="left:9px;top:89px;width:53px;height:50px;border-radius:22px 22px 0 0;background:#1b8f6c"></div>
   <div class="a" style="left:55px;top:75px;width:27px;height:62px;background:#aaa69e"></div>
   <div class="t" style="left:8.6px;top:48.7px;font-size:9.5px;line-height:10px;color:#f6f6f6;width:65px">
    <div style="display:flex;justify-content:space-between"><span>Be</span><span>part</span><span>of</span></div>
    <div>Creative</div><div>Collective's</div>
    <div style="text-align:right;font-style:italic">Design</div>
    <div style="text-align:right">Internship</div>
    <div style="text-align:right">Program</div>
   </div>
   <div class="a" style="left:8px;top:112px;width:45px;height:1px;background:#dde6e2;opacity:0.8"></div>
   <div class="a" style="left:8px;top:115.5px;width:58px;height:1px;background:#dde6e2;opacity:0.8"></div>
   <div class="a" style="left:8px;top:123.5px;width:6px;height:6px;border-radius:50%;background:#fff"></div>
   <div class="t" style="left:15.5px;top:122.5px;font-size:7px;font-weight:700;color:#f4f4f4;letter-spacing:-0.2px">Creative Collective</div>
  </div>
  <div class="a" style="left:63px;top:167px;width:82px;height:90px;border-radius:6px;background:#070707;overflow:hidden">
   <div class="a" style="left:4px;top:4px;width:74px;height:31px;background:linear-gradient(160deg,#c8b6aa 0%,#c8b6aa 12%,#2a2424 13%,#2a2424 20%,#cdbab0 21%,#cdbab0 30%,#2e2828 31%,#2e2828 100%)"></div>
   <div class="a" style="left:50px;top:22px;width:24px;height:13px;background:linear-gradient(210deg,#c8b6aa 0%,#c8b6aa 30%,#1a1616 31%,#1a1616 60%,#c8b6aa 61%)"></div>
   <div class="a" style="left:19px;top:16px;width:4px;height:4px;border-radius:50%;background:#fff"></div>
   <div class="a" style="left:24px;top:16.5px;width:30px;height:3px;background:#e8e6e4"></div>
   <div class="a" style="left:23px;top:21.5px;width:28px;height:1.5px;background:#8a8480"></div>
   <div class="a" style="left:4px;top:45px;width:12px;height:1px;background:#333"></div>
   <div class="a" style="left:4.4px;top:44.8px;width:18.6px;height:18.6px;border-radius:50%;background:#0f3d66"></div>
   <div class="a" style="left:25.1px;top:44.8px;width:18.6px;height:18.6px;border-radius:50%;background:#35dcc2"></div>
   <div class="a" style="left:10.5px;top:50.5px;width:7px;height:7px;border-radius:50%;background:#fff"></div>
   <div class="a" style="left:54.3px;top:45.3px;width:7px;height:7.8px;background:#0f3d66"></div>
   <div class="a" style="left:62.3px;top:45.3px;width:7px;height:7.8px;background:#35dcc2"></div>
   <div class="a" style="left:70.6px;top:45.3px;width:7px;height:7.8px;background:#f4a6d4"></div>
  </div>
  <div class="a" style="left:160px;top:58px;width:203px;height:220px;border-radius:6px;background:#000;box-shadow:0 4px 14px rgba(0,0,0,0.12);overflow:hidden">
   <div class="a" style="left:79px;top:0;width:34px;height:106px;background:linear-gradient(180deg,#35e1c3 0%,#35e1c3 62%,#0a1a18 100%)"></div>
   <div class="a" style="left:113px;top:0;width:90px;height:106px;overflow:hidden;background:linear-gradient(180deg,#d2d2ce 0%,#c4c4c0 16%,#8e8e8a 26%,#9a9a96 50%,#3a302a 72%,#241c18 100%)">
    <div class="a" style="left:0;top:24px;width:16px;height:48px;background:linear-gradient(90deg,#d8d4cc,#c8c4bc)"></div>
    <div class="a" style="left:16px;top:20px;width:48px;height:62px;background:linear-gradient(90deg,#a8acb0 0%,#d4d8dc 30%,#9a9ea2 60%,#c0c4c8 100%)"></div>
    <div class="a" style="left:64px;top:6px;width:26px;height:100px;background:linear-gradient(180deg,#1a1818,#0e0c0c)"></div>
    <div class="a" style="left:79px;top:16px;width:6px;height:8px;background:#e8d0d0"></div>
    <div class="a" style="left:77px;top:34px;width:9px;height:16px;background:#a8b4d8"></div>
    <div class="a" style="left:0;top:74px;width:64px;height:32px;background:linear-gradient(180deg,#3a2e28,#1e1814)"></div>
    <div class="a" style="left:36px;top:26px;width:9px;height:11px;border-radius:50%;background:#e4d8c4"></div>
    <div class="a" style="left:28px;top:36px;width:26px;height:48px;border-radius:8px 8px 4px 10px;background:#8ea0cc;transform:skewX(-6deg)"></div>
    <div class="a" style="left:50px;top:40px;width:16px;height:5px;border-radius:3px;background:#8ea0cc;transform:rotate(-25deg)"></div>
    <div class="a" style="left:38px;top:52px;width:7px;height:34px;background:#f0f0ee"></div>
    <div class="a" style="left:37px;top:86px;width:7px;height:10px;background:#e8e8e6"></div>
   </div>
   <svg style="left:0;top:0" width="50" height="40"><path d="M22 10.5A8 8 0 1 0 22 26.5Z" fill="#fff"/><path d="M27.5 11A7.5 7.5 0 1 0 27.5 26" fill="none" stroke="#fff" stroke-width="3.2"/><circle cx="29" cy="18.5" r="2.7" fill="#fff"/></svg>
   <div class="t" style="left:15.5px;top:113px;font-size:13px;line-height:14.4px;color:#eeeeee;letter-spacing:-0.15px">“Working with diverse minds<br>allows us to stay curious<br>and bring bold ideas to life.”</div>
   <div class="a" style="left:0;top:167px;width:203px;height:1.5px;background:#24544e"></div>
  </div>
 </div>

 <!-- set 3 : beige -->
 <div class="a" style="left:931px;top:8px;width:427px;height:260px;border-radius:12px;background:#dfcfb5;overflow:hidden">
  <div class="a" style="left:15px;top:19px;width:130px;height:193px;border-radius:6px;background:#3d322e;overflow:hidden">
   <div class="a" style="left:0;top:0;width:130px;height:87px;background:linear-gradient(90deg,#cfcac4 0%,#dcd8d4 60%,#d6d2ce 100%)"></div>
   <div class="a" style="left:14px;top:0;width:60px;height:4px;background:#6a3a2a"></div>
   <div class="a" style="left:103px;top:24px;width:14px;height:24px;border-radius:40% 40% 10% 10%;background:#eeece8"></div>
   <div class="a" style="left:0;top:64px;width:100px;height:23px;background:linear-gradient(180deg,#5a4a3e 0%,#3a2c24 100%)"></div>
   <div class="a" style="left:2px;top:4px;width:89px;height:68px;background:#e8e6e3;transform:rotate(-1.5deg)"></div>
   <div class="a" style="left:21px;top:22px;width:69px;height:50px;background:#bf9f7d"></div>
   <div class="a" style="left:46px;top:30px;width:20px;height:20px;border-radius:50%;border:1.4px solid #3a3028;box-sizing:border-box"></div>
   <div class="a" style="left:64px;top:30px;width:22px;height:28px;border-radius:40% 40% 30% 50%;background:#e2c2a8;transform:rotate(-20deg)"></div>
   <div class="a" style="left:88px;top:54px;width:44px;height:34px;border-radius:30% 0 0 0;background:linear-gradient(160deg,#c8d4e4 0%,#a8bcd6 100%);transform:rotate(-8deg)"></div>
   <div class="a" style="left:6px;top:98px;width:22px;height:1.5px;background:#c8beb6"></div>
   <div class="a" style="left:50px;top:98px;width:25px;height:1.5px;background:#c8beb6"></div>
   <div class="a" style="left:112px;top:98px;width:12px;height:1.5px;background:#c8beb6"></div>
   <div class="a" style="left:30px;top:111px;width:70px;height:70px;background:#e6e4df"></div>
   <div class="a" style="left:35px;top:123px;width:60px;height:46px;background:linear-gradient(90deg,#b8aea4 0%,#f0eeea 12%,#e8e4de 28%,#c8bcb0 45%,#d6d2cc 60%,#c0b6ac 100%)"></div>
   <div class="a" style="left:48px;top:134px;width:14px;height:24px;background:#e4e0d8;border:1px solid #8a7a6a;transform:rotate(-8deg)"></div>
   <div class="a" style="left:72px;top:128px;width:9px;height:9px;border-radius:50%;background:#4a3628"></div>
   <div class="a" style="left:70px;top:136px;width:16px;height:33px;border-radius:6px 6px 0 0;background:#a8bcd0"></div>
   <div class="a" style="left:88px;top:146px;width:5px;height:23px;background:#b87848"></div>
  </div>
  <div class="a" style="left:15px;top:227px;width:130px;height:40px;border-radius:6px;background:#f8f2e6"></div>
  <div class="a" style="left:160px;top:20px;width:98px;height:98px;border-radius:6px;overflow:hidden;background:linear-gradient(180deg,#d4d2c4 0%,#c8c8b6 50%,#56646a 75%,#2c3a40 100%)">
   <div class="a" style="left:0;top:50px;width:20px;height:30px;border-radius:0 50% 50% 0;background:#c49a88"></div>
   <div class="a" style="left:0;top:75px;width:98px;height:23px;background:linear-gradient(90deg,#4a5a60,#6a7a80 50%,#2a3438)"></div>
   <div class="a" style="left:17px;top:15.5px;width:64px;height:65.5px;background:#fbf4e6"></div>
   <div class="t" style="left:19px;top:19px;font-size:7px;font-weight:700;color:#3a3a3a;letter-spacing:-0.2px">Cozy</div>
   <div class="t" style="left:55px;top:19px;font-size:7px;font-weight:700;color:#3a3a3a;letter-spacing:-0.2px">Crochet</div>
   <div class="t" style="left:26px;top:34px;font-size:20px;font-style:italic;color:#353535">60%</div>
   <div class="a" style="left:46px;top:62px;width:5px;height:1px;background:#555"></div>
   <div class="a" style="left:19px;top:77px;width:22px;height:1px;background:#999"></div>
   <div class="a" style="left:64px;top:77px;width:14px;height:1px;background:#999"></div>
  </div>
  <div class="a" style="left:160px;top:133px;width:98px;height:130px;border-radius:6px;overflow:hidden;background:linear-gradient(180deg,#4a3a2c 0%,#6a5a48 18%,#4a3a2c 40%,#2e261e 100%)">
   <div class="a" style="left:0;top:16px;width:70px;height:8px;background:#9a9488;opacity:0.7"></div>
   <div class="a" style="left:45px;top:0;width:53px;height:40px;background:linear-gradient(180deg,#8a8070,#6a6050)"></div>
   <div class="a" style="left:46px;top:0;width:6px;height:130px;background:#3e4a3a"></div>
   <div class="a" style="left:86px;top:0;width:8px;height:130px;background:#3e4a3a"></div>
   <div class="a" style="left:0;top:20px;width:34px;height:32px;background:radial-gradient(ellipse at 40% 50%,#e07a30 0%,#b85a28 35%,rgba(90,60,40,0) 70%)"></div>
   <div class="a" style="left:10px;top:24px;width:2px;height:2px;background:#ffe0a0;box-shadow:6px 2px 0 #ffe0a0,12px 3px 0 #ffe0a0,18px 4px 0 #ffe0a0"></div>
   <div class="a" style="left:39px;top:35px;width:22px;height:30px;border-radius:45% 45% 30% 30%;background:#c8a06a"></div>
   <div class="a" style="left:43px;top:37px;width:14px;height:17px;border-radius:50%;background:#dcb898"></div>
   <div class="a" style="left:28px;top:52px;width:48px;height:80px;border-radius:18px 18px 0 0;background:#9c8668"></div>
   <div class="a" style="left:45px;top:54px;width:10px;height:26px;background:#cfc4e0"></div>
   <div class="a" style="left:2px;top:98px;width:24px;height:32px;border-radius:50% 50% 0 0;border:2px solid #a07040;box-sizing:border-box"></div>
   <div class="a" style="left:74px;top:96px;width:24px;height:5px;border-radius:50%;background:#8a9aa0"></div>
   <div class="a" style="left:80px;top:75px;width:10px;height:12px;border-radius:50%;background:#d8e0d0;opacity:0.8"></div>
   <div class="a" style="left:37px;top:21px;width:24px;height:6px;background:#fff"></div>
   <div class="a" style="left:39px;top:23px;width:20px;height:2px;background:#222"></div>
   <div class="t" style="left:11px;top:53px;font-size:7px;font-weight:700;color:#fff">IN</div>
   <div class="t" style="left:79px;top:53px;font-size:7px;font-weight:700;color:#fff">MY</div>
   <div class="t" style="left:9px;top:86px;font-size:7px;font-weight:700;color:#fff">STYLE</div>
   <div class="t" style="left:72px;top:88px;font-size:7px;font-weight:700;color:#fff">ICON</div>
  </div>
  <div class="a" style="left:273px;top:69px;width:139px;height:200px;border-radius:6px;background:#fff;overflow:hidden">
   <div class="a" style="left:0;top:6px;width:139px;height:42px;background:#3c312d"></div>
   <div class="t" style="left:12px;top:20px;font-size:4.5px;font-weight:700;color:#d8d0ca">MY CREATIVE</div>
   <div class="t" style="left:12px;top:25px;font-family:'Liberation Serif';font-style:italic;font-size:10.5px;color:#f0ece8;letter-spacing:0.3px">project notes</div>
   <div class="a" style="left:80px;top:10px;width:48px;height:34px;background:#e8e2d8"></div>
   <div class="a" style="left:83px;top:13px;width:42px;height:28px;background:linear-gradient(115deg,#6a4a2a 0%,#c8a070 22%,#8a6a48 35%,#7890a0 55%,#5a7a98 75%,#d8b898 100%)"></div>
   <div class="t" style="left:6px;top:56px;font-size:6.3px;font-weight:700;color:#4a4444">Crochet every day</div>
   <div class="a" style="left:6px;top:68px;width:127px;height:8px;background:#3c312d"></div>
   <div class="a" style="left:56px;top:71px;width:25px;height:1.5px;background:#b8b0aa"></div>
   <div class="a" style="left:6px;top:76px;width:127px;height:32px;background:#f4f2ee"></div>
   <div class="a" style="left:8px;top:79px;width:120px;height:1px;background:#a8a4a0"></div>
   <div class="a" style="left:8px;top:82px;width:8px;height:1px;background:#a8a4a0"></div>
   <div class="a" style="left:6px;top:108px;width:127px;height:8px;background:#3c312d"></div>
   <div class="a" style="left:58px;top:111px;width:22px;height:1.5px;background:#b8b0aa"></div>
   <div class="a" style="left:6px;top:116px;width:127px;height:28px;background:#f4f2ee"></div>
   <div class="a" style="left:8px;top:119px;width:55px;height:1px;background:#a8a4a0"></div>
   <div class="a" style="left:6px;top:144px;width:127px;height:8px;background:#3c312d"></div>
   <div class="a" style="left:62px;top:147px;width:14px;height:1.5px;background:#b8b0aa"></div>
   <div class="a" style="left:6px;top:152px;width:127px;height:40px;background:#f4f2ee"></div>
   <div class="a" style="left:8px;top:155px;width:120px;height:1px;background:#a8a4a0"></div>
   <div class="a" style="left:8px;top:158px;width:50px;height:1px;background:#a8a4a0"></div>
  </div>
 </div>

 <!-- set 4 : green -->
 <div class="a" style="left:1388px;top:8px;width:427px;height:260px;border-radius:12px;background:#06c087;overflow:hidden">
  <div class="a" style="left:15px;top:57px;width:80px;height:82px;border-radius:5px;background:#0a3a20">
   <div class="t" style="left:6px;top:6.5px;font-size:9.5px;line-height:8.1px;font-weight:700;color:#8ef07a;transform:scaleX(0.78);transform-origin:left">WE'RE<br>SOMETHING<br>YOU'VE<br>WAITING</div>
   <div class="a" style="left:6px;top:41px;width:16px;height:1.5px;background:#7ab080"></div>
   
   <div class="a" style="left:6px;top:71px;width:30px;height:4px;background:#8ef07a"></div>
  </div>
  <div class="a" style="left:15px;top:214px;width:80px;height:60px;background:#fff"></div>
 </div>
</div>

<!-- sets next button -->
<div class="a" style="left:1835px;top:762px;width:48px;height:48px;box-sizing:border-box;border-radius:50%;background:#2b2b2e;border:1px solid #4e4e52"></div>
<svg style="left:0;top:0" width="1900" height="869"><path d="M1858 780L1865 787L1858 794" fill="none" stroke="#f4f4f4" stroke-width="2" stroke-linecap="round" stroke-linejoin="round"/></svg>

<!-- annotation: main blue rect -->
<div class="a" style="left:424px;top:243px;width:1463px;height:625px;box-sizing:border-box;border:8px solid #0462e2;border-radius:7px"></div>
<!-- help -->
<div class="a" style="left:1811px;top:789px;width:60px;height:60px;border-radius:50%;background:#8b3dff;box-shadow:0 2px 6px rgba(0,0,0,0.25)"></div>
<div class="t" style="left:1811px;top:808.5px;width:60px;text-align:center;font-size:23px;-webkit-text-stroke:0.7px #fff;color:#fff">?</div>

<!-- right page scrollbar -->
<div class="a" style="left:1901px;top:0;width:19px;height:869px;background:#2c2c2c"></div>
<div class="a" style="left:1904.7px;top:22.5px;width:11.3px;height:90px;border-radius:6px;background:#a7a7a7"></div>
<svg style="left:0;top:0" width="1920" height="869"><path d="M1910.4 6L1916.7 15.7H1904Z M1910.4 864L1916.7 854.3H1904Z" fill="#a7a7a7"/></svg>

</body></html>
